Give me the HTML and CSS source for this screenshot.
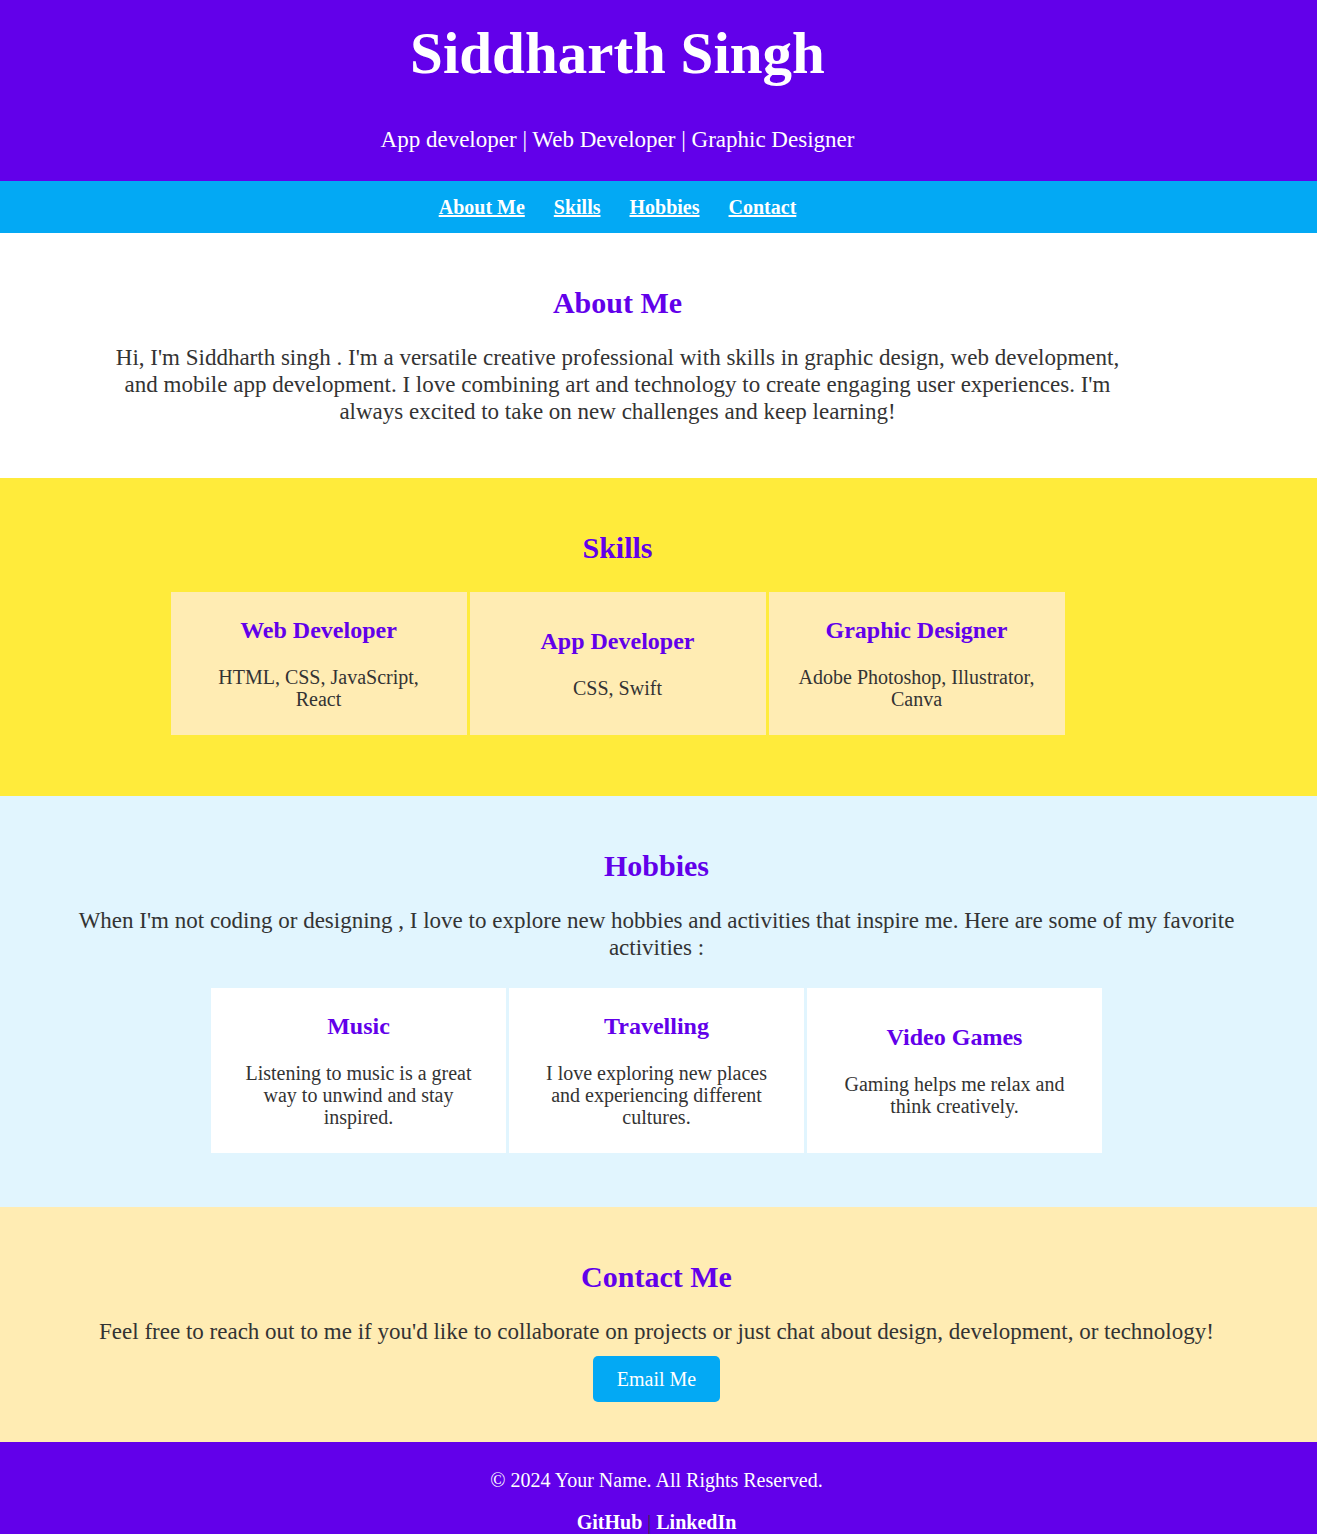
FILE: index.html
```html
<!DOCTYPE html>
<html lang="en">
<head>
<meta charset="utf-8">
<title>Siddharth Singh</title>
<link rel="stylesheet" href="styles.css">
</head>
<body>
<div class="page">
  <header class="header">
    <h1>Siddharth Singh</h1>
    <p class="tagline">App developer | Web Developer | Graphic Designer</p>
  </header>
  <nav class="nav">
    <a href="#about">About Me</a>
    <a href="#skills">Skills</a>
    <a href="#hobbies">Hobbies</a>
    <a href="#contact">Contact</a>
  </nav>
  <section class="section about" id="about">
    <h2>About Me</h2>
    <p class="lead">Hi, I'm Siddharth singh . I'm a versatile creative professional with skills in graphic design, web development, and mobile app development. I love combining art and technology to create engaging user experiences. I'm always excited to take on new challenges and keep learning!</p>
  </section>
  <section class="section skills" id="skills">
    <h2>Skills</h2>
    <div class="cards">
      <article class="card"><h3>Web Developer</h3><p>HTML, CSS, JavaScript, React</p></article>
      <article class="card"><h3>App Developer</h3><p>CSS, Swift</p></article>
      <article class="card"><h3>Graphic Designer</h3><p>Adobe Photoshop, Illustrator, Canva</p></article>
    </div>
  </section>
  <section class="section hobbies" id="hobbies">
    <h2>Hobbies</h2>
    <p class="lead">When I'm not coding or designing , I love to explore new hobbies and activities that inspire me. Here are some of my favorite activities :</p>
    <div class="cards">
      <article class="card"><h3>Music</h3><p>Listening to music is a great way to unwind and stay inspired.</p></article>
      <article class="card"><h3>Travelling</h3><p>I love exploring new places and experiencing different cultures.</p></article>
      <article class="card"><h3>Video Games</h3><p>Gaming helps me relax and think creatively.</p></article>
    </div>
  </section>
  <section class="section contact" id="contact">
    <h2>Contact Me</h2>
    <p class="lead">Feel free to reach out to me if you'd like to collaborate on projects or just chat about design, development, or technology!</p>
    <a class="button" href="mailto:me@example.com">Email Me</a>
  </section>
  <footer class="footer">
    <p>© 2024 Your Name. All Rights Reserved.</p>
    <p class="links"><a href="#github">GitHub</a> | <a href="#linkedin">LinkedIn</a></p>
  </footer>
</div>
</body>
</html>
```
FILE: styles.css
```css
* { box-sizing: border-box; }

body {
  margin: 0;
  background: #fff;
  color: #333;
  font-family: "Liberation Serif", "Times New Roman", serif;
  font-size: 20px;
  line-height: 22px;
  text-align: center;
}

.page { margin-right: 3px; }

h1, h2, h3, p { margin: 0; }

.header {
  padding: 20px 82px 25px 0;
  background: #6200ea;
  color: #fff;
}

h1 {
  margin-bottom: 38px;
  font-size: 59px;
  line-height: 66px;
}

.tagline {
  font-size: 23px;
  line-height: 32px;
}

.nav {
  display: flex;
  justify-content: center;
  gap: 29px;
  padding: 15px 82px 15px 0;
  background: #03a9f4;
}

.nav a {
  color: #fff;
  font-weight: bold;
}

.section { padding: 53px 64px 53px 60px; }

h2 {
  margin-bottom: 24px;
  color: #6200ea;
  font-size: 30px;
  line-height: 34px;
}

.lead {
  font-size: 23px;
  line-height: 27px;
}

.about {
  padding-right: 192px;
  padding-left: 110px;
}

.skills {
  padding-right: 142px;
  padding-bottom: 61px;
  background: #ffeb3b;
}

.hobbies {
  padding-bottom: 54px;
  background: #e1f5fe;
}

.contact {
  padding-bottom: 40px;
  background: #ffecb3;
}

.cards {
  display: flex;
  justify-content: center;
  gap: 3px;
  margin-top: 27px;
}

.card {
  display: flex;
  flex: 0 1 296px;
  flex-direction: column;
  justify-content: center;
  padding: 24px 30px 25px;
  background: #ffecb3;
}

.hobbies .card {
  flex-basis: 295px;
  background: #fff;
}

h3 {
  margin-bottom: 22px;
  color: #6200ea;
  font-size: 24px;
  line-height: 28px;
}

.button {
  display: inline-block;
  margin-top: 11px;
  padding: 12px 24px;
  border-radius: 5px;
  background: #03a9f4;
  color: #fff;
  text-decoration: none;
}

.footer {
  padding: 27px 4px 1px 0;
  background: #6200ea;
  color: #fff;
}

.links {
  margin-top: 20px;
  color: #333;
}

.links a {
  color: #fff;
  font-weight: bold;
  text-decoration: none;
}
```
